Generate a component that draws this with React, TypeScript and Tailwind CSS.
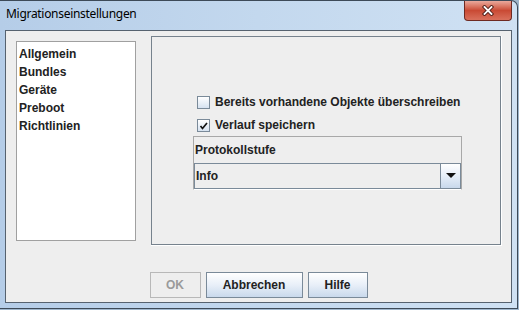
const ui = "font-['Liberation_Sans',Arial,sans-serif] text-[12px] font-bold text-[#222]";

function CheckBox({ label, checked }: { label: string; checked?: boolean }) {
  return (
    <div className="flex h-[18px] items-center gap-[5px] pl-[4px]">
      <span className="flex size-[13px] items-center justify-center border border-[#7a8a99] bg-gradient-to-b from-white to-[#d6e2f0]">
        {checked && (
          <svg width="9" height="9" viewBox="0 0 9 9">
            <path d="M1.5 5 L3.5 7.5 L8 2" fill="none" stroke="#111" strokeWidth="1.7" />
          </svg>
        )}
      </span>
      <span className={ui}>{label}</span>
    </div>
  );
}

function Btn({ label, disabled, w }: { label: string; disabled?: boolean; w: string }) {
  return (
    <button
      type="button"
      className={`flex h-[26px] items-center justify-center border ${w} ${
        disabled
          ? "border-[#b8b8b8] bg-[#eeeeee] text-[#9a9a9a]"
          : "border-[#7a8a99] bg-gradient-to-b from-white via-[#e8eff8] to-[#c9d9ec] text-[#222]"
      } font-['Liberation_Sans',Arial,sans-serif] text-[12px] font-bold`}
    >
      {label}
    </button>
  );
}

export default function App() {
  return (
    <div className="relative h-[310px] w-[519px] overflow-hidden bg-[#9fb6cc]">
      <div className="flex h-[309px] w-[518px] flex-col rounded-tr-[7px] border-r border-b border-t border-[#3d4a58] bg-gradient-to-r from-[#b5cde8] via-[#c3d8ee] to-[#cfe1f3]">
        {/* title bar */}
        <div className="flex h-[29px] items-start justify-between">
          <span className="mt-[4px] pl-[6px] font-['Noto_Sans',sans-serif] text-[12px] tracking-[-0.3px] text-black">
            Migrationseinstellungen
          </span>
          <span className="mr-[5px] flex h-[20px] w-[48px] items-center justify-center rounded-b-[4px] border border-t-0 border-[#6e2a22] bg-gradient-to-b from-[#e9a99c] via-[#c94a34] to-[#d9705c]">
            <svg width="14" height="11" viewBox="0 0 14 11">
              <path d="M3.5 2 L10.5 9 M10.5 2 L3.5 9" stroke="#4a1a14" strokeWidth="3.6" strokeLinecap="square" />
              <path d="M3.5 2 L10.5 9 M10.5 2 L3.5 9" stroke="#fff" strokeWidth="1.8" strokeLinecap="square" />
            </svg>
          </span>
        </div>
        {/* client area */}
        <div className="ml-[5px] mr-[5px] flex h-[273px] flex-col border border-[#56626f] bg-[#eeeeee]">
          <div className="flex items-start pl-[10px] pt-[5px]">
            <div className="mt-[5px] flex h-[200px] w-[120px] flex-col border border-[#a0a0a0] bg-white pl-[2px] pt-[3px]">
              {["Allgemein", "Bundles", "Geräte", "Preboot", "Richtlinien"].map((t) => (
                <span key={t} className={`${ui} leading-[18px]`}>
                  {t}
                </span>
              ))}
            </div>
            <div className="ml-[15px] h-[210px] w-[351px] border-r border-b border-white">
              <div className="flex h-[209px] w-[350px] flex-col border border-[#76828d] pl-[41px] pt-[56px]">
                <div className="flex flex-col gap-[5px]">
                  <CheckBox label="Bereits vorhandene Objekte überschreiben" />
                  <CheckBox label="Verlauf speichern" checked />
                </div>
                <div className="mt-[2px] flex w-[269px] flex-col border border-[#a8a8a8] border-b-white">
                  <span className={`${ui} pl-[1px] leading-[26px]`}>Protokollstufe</span>
                  <div className="flex h-[26px] border border-[#7a8a99] bg-[#eeeeee]">
                    <span className={`${ui} flex flex-1 items-center pl-[1px] border-r border-[#7a8a99]`}>Info</span>
                    <span className="flex w-[19px] items-center justify-center bg-gradient-to-b from-white via-[#e6eef8] to-[#c8d8eb]">
                      <svg width="10" height="6" viewBox="0 0 10 6">
                        <path d="M0 0 H10 L5 5 Z" fill="#111" />
                      </svg>
                    </span>
                  </div>
                </div>
              </div>
            </div>
          </div>
          <div className="mt-[26px] flex justify-center gap-[5px]">
            <Btn label="OK" disabled w="w-[51px]" />
            <Btn label="Abbrechen" w="w-[97px]" />
            <Btn label="Hilfe" w="w-[60px]" />
          </div>
        </div>
      </div>
    </div>
  );
}
